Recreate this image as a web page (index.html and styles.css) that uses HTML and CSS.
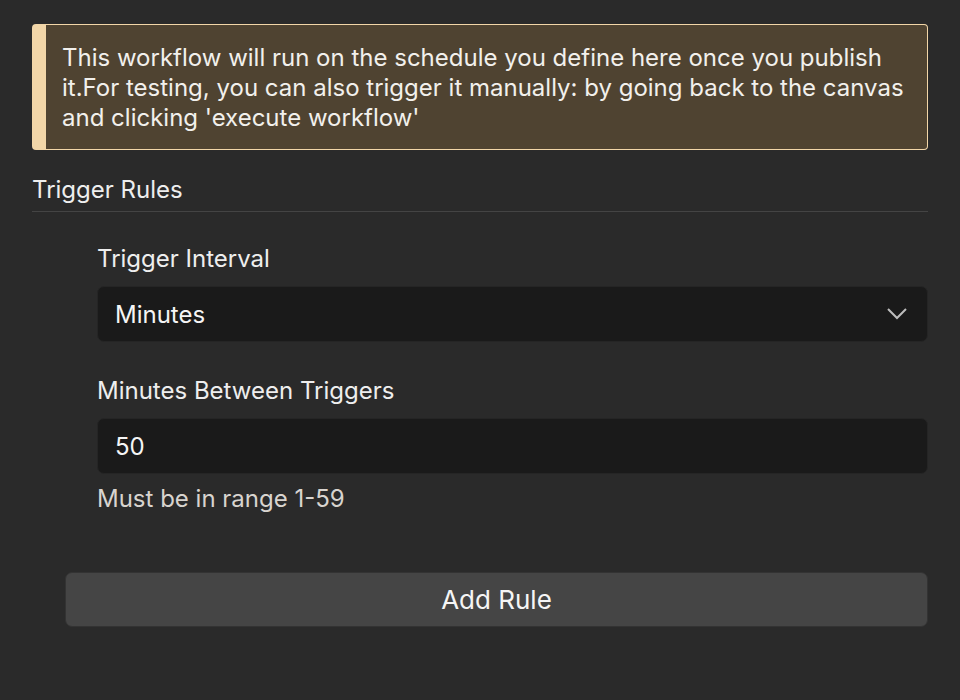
FILE: index.html
```html
<!DOCTYPE html>
<html lang="en">
<head>
<meta charset="UTF-8">
<meta name="viewport" content="width=device-width, initial-scale=1.0">
<title>Schedule Trigger</title>
<link rel="stylesheet" href="styles.css">
</head>
<body>

<div id="panel">
  <div class="callout">
    This workflow will run on the schedule you define here once you publish it.For testing, you can also trigger it manually: by going back to the canvas and clicking 'execute workflow'
  </div>

  <div class="section-title">Trigger Rules</div>

  <div class="rules">
    <div class="rule">
      <div class="field">
        <label class="label">Trigger Interval</label>
        <div class="select">
          <span>Minutes</span>
          <svg class="chevron" width="20" height="12" viewBox="0 0 20 12">
            <path d="M1 1 L10 10 L19 1" fill="none" stroke="#bdbdbd" stroke-width="2"/>
          </svg>
        </div>
      </div>
      <div class="field">
        <label class="label">Minutes Between Triggers</label>
        <div class="input">50</div>
        <div class="hint">Must be in range 1-59</div>
      </div>
    </div>
    <button class="add-button">Add Rule</button>
  </div>
</div>

</body>
</html>
```

FILE: styles.css
```css
body {
  margin: 0;
  background-color: #2a2a2a;
  font-family: Inter, "Noto Sans", sans-serif;
  color: #f0f0f0;
}
#panel {
  padding: 24px 32px;
}
.callout {
  background-color: #4f4331;
  border: 1px solid #f2d6a8;
  border-left: 14px solid #f2d6a8;
  border-radius: 4px;
  padding: 18px 16px 16px 16px;
  font-size: 24px;
  line-height: 30px;
  color: #f2f0ec;
}
.section-title {
  margin-top: 25px;
  padding-bottom: 6px;
  border-bottom: 1px solid #444;
  font-size: 24px;
  line-height: 30px;
  color: #eeeeee;
}
.rules {
  padding-left: 33px;
}
.rule {
  padding-left: 32px;
  padding-top: 32px;
}
.field + .field {
  margin-top: 34px;
}
.label {
  display: block;
  font-size: 24px;
  line-height: 30px;
  margin-bottom: 12px;
  color: #eeeeee;
}
.select,
.input {
  display: flex;
  align-items: center;
  justify-content: space-between;
  height: 56px;
  box-sizing: border-box;
  padding: 0 20px 0 17px;
  background-color: #1a1a1a;
  border: 1px solid #252525;
  border-radius: 7px;
  font-size: 24px;
  color: #f5f5f5;
}
.hint {
  margin-top: 10px;
  font-size: 24px;
  line-height: 30px;
  color: #d8d4cf;
}
.add-button {
  display: block;
  width: 100%;
  height: 55px;
  margin-top: 58px;
  background-color: #454545;
  border: 1px solid #333;
  border-radius: 7px;
  font-family: Inter, "Noto Sans", sans-serif;
  font-size: 26px;
  color: #f5f5f5;
  cursor: pointer;
}
```
